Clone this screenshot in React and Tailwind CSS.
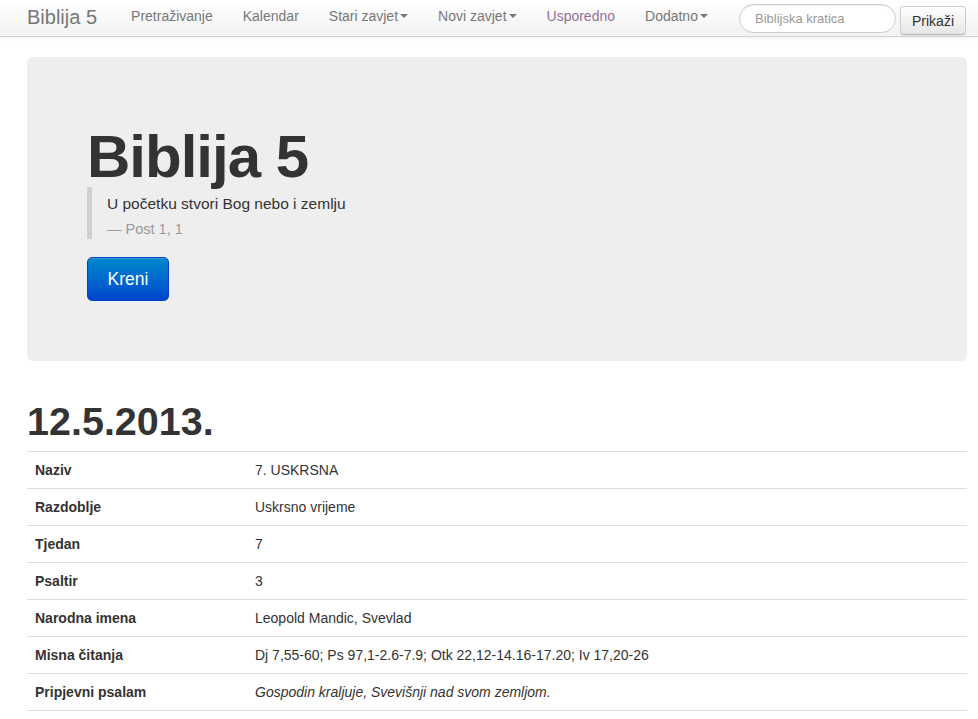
import React from 'react';

const navItems = [
  { label: 'Pretraživanje' },
  { label: 'Kalendar' },
  { label: 'Stari zavjet', caret: true },
  { label: 'Novi zavjet', caret: true },
  { label: 'Usporedno', visited: true },
  { label: 'Dodatno', caret: true },
];

const rows = [
  ['Naziv', '7. USKRSNA'],
  ['Razdoblje', 'Uskrsno vrijeme'],
  ['Tjedan', '7'],
  ['Psaltir', '3'],
  ['Narodna imena', 'Leopold Mandic, Svevlad'],
  ['Misna čitanja', 'Dj 7,55-60; Ps 97,1-2.6-7.9; Otk 22,12-14.16-17.20; Iv 17,20-26'],
  ['Pripjevni psalam', 'Gospodin kraljuje, Svevišnji nad svom zemljom.', true],
];

function Caret() {
  return (
    <span className="ml-[2px] inline-block w-0 h-0 border-t-[4px] border-t-[#777] border-x-[4px] border-x-transparent" />
  );
}

export default function App() {
  return (
    <div className="min-h-[719px] bg-white text-[#333] text-[14px] leading-5 font-['Liberation_Sans',Arial,sans-serif]">
      {/* navbar */}
      <div className="h-[37px] bg-gradient-to-b from-white to-[#f2f2f2] border-b border-[#d4d4d4] shadow-[0_1px_4px_rgba(0,0,0,0.065)]">
        <div className="flex items-center h-[36px] pl-[27px] pr-[12px]">
          <span className="text-[20px] leading-5 text-[#777] pr-[19px] pb-[3px]">Biblija 5</span>
          <nav className="flex items-center pb-[4px]">
            {navItems.map((n) => (
              <span
                key={n.label}
                className={`flex items-center px-[15px] ${n.visited ? 'text-[#94709a]' : 'text-[#777]'}`}
              >
                {n.label}
                {n.caret && <Caret />}
              </span>
            ))}
          </nav>
          <div className="ml-auto flex items-start gap-[4px] h-[36px] pt-[4px]">
            <div className="ml-[1px] w-[157px] h-[29px] rounded-full border border-[#ccc] bg-white shadow-[inset_0_1px_1px_rgba(0,0,0,0.075)] flex items-center pl-[15px] text-[13px] text-[#999]">
              Biblijska kratica
            </div>
            <button className="h-[29px] w-[66px] mt-[2px] rounded-[4px] border border-[#ccc] border-b-[#b3b3b3] bg-gradient-to-b from-white to-[#e6e6e6] text-[14px] text-[#333] shadow-[inset_0_1px_0_rgba(255,255,255,0.2),0_1px_2px_rgba(0,0,0,0.05)]">
              Prikaži
            </button>
          </div>
        </div>
      </div>

      <div className="w-[940px] ml-[27px] flex flex-col">
        {/* hero */}
        <div className="mt-[20px] bg-[#eee] rounded-[6px] p-[60px] flex flex-col items-start">
          <h1 className="mt-[10px] text-[60px] leading-[60px] font-bold tracking-[-1px] text-[#333]">
            Biblija 5
          </h1>
          <div className="border-l-[5px] border-[#d0d0d0] pl-[15px] mb-[18px]">
            <p className="pt-[2px] text-[15.5px] leading-[30px] text-[#333]">U početku stvori Bog nebo i zemlju</p>
            <p className="text-[14.5px] leading-5 text-[#999]">— Post 1, 1</p>
          </div>
          <button className="h-[44px] w-[82px] rounded-[5px] border border-[#0044cc] bg-gradient-to-b from-[#0088cc] to-[#0044cc] text-white text-[17.5px] shadow-[inset_0_1px_0_rgba(255,255,255,0.2)]">
            Kreni
          </button>
        </div>

        {/* date */}
        <h2 className="mt-[40px] mb-[10px] text-[39.5px] leading-10 font-bold text-[#333]">
          12.5.2013.
        </h2>

        <table className="w-full border-collapse">
          <tbody>
            {rows.map(([k, v, it]) => (
              <tr key={k} className="border-t border-b border-[#ddd]">
                <td className="w-[220px] p-[8px] leading-5 font-bold">{k}</td>
                <td className={`p-[8px] leading-5 ${it ? 'italic' : ''}`}>{v}</td>
              </tr>
            ))}
          </tbody>
        </table>
      </div>
    </div>
  );
}
